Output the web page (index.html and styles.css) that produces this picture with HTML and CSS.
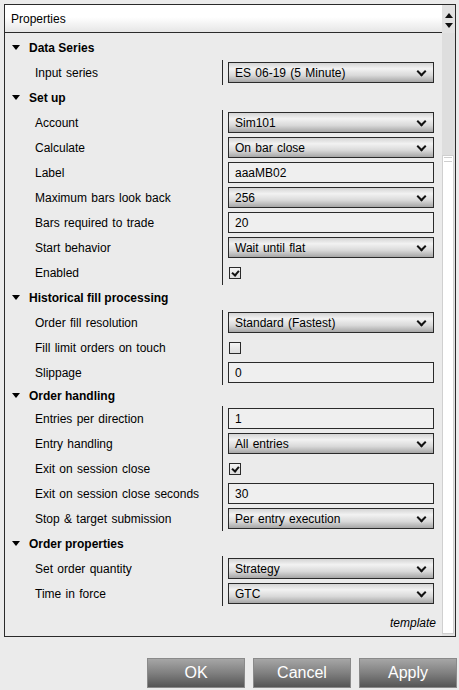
FILE: index.html
```html
<!DOCTYPE html>
<html>
<head>
<meta charset="utf-8">
<link rel="stylesheet" href="styles.css">
</head>
<body>
<div class="panel">
  <div class="main">
    <div class="header">Properties</div>
    <div class="list">
      <div class="cat"><span class="tri"></span>Data Series</div>
      <div class="group">
        <div class="row"><div class="lbl">Input series</div><div class="val"><div class="dd">ES 06-19 (5 Minute)</div></div></div>
      </div>
      <div class="cat"><span class="tri"></span>Set up</div>
      <div class="group">
        <div class="row"><div class="lbl">Account</div><div class="val"><div class="dd">Sim101</div></div></div>
        <div class="row"><div class="lbl">Calculate</div><div class="val"><div class="dd">On bar close</div></div></div>
        <div class="row"><div class="lbl">Label</div><div class="val"><div class="tb">aaaMB02</div></div></div>
        <div class="row"><div class="lbl">Maximum bars look back</div><div class="val"><div class="dd">256</div></div></div>
        <div class="row"><div class="lbl">Bars required to trade</div><div class="val"><div class="tb">20</div></div></div>
        <div class="row"><div class="lbl">Start behavior</div><div class="val"><div class="dd">Wait until flat</div></div></div>
        <div class="row"><div class="lbl">Enabled</div><div class="val"><div class="cb on"></div></div></div>
      </div>
      <div class="cat"><span class="tri"></span>Historical fill processing</div>
      <div class="group">
        <div class="row"><div class="lbl">Order fill resolution</div><div class="val"><div class="dd">Standard (Fastest)</div></div></div>
        <div class="row"><div class="lbl">Fill limit orders on touch</div><div class="val"><div class="cb"></div></div></div>
        <div class="row"><div class="lbl">Slippage</div><div class="val"><div class="tb">0</div></div></div>
      </div>
      <div class="cat short"><span class="tri"></span>Order handling</div>
      <div class="group">
        <div class="row"><div class="lbl">Entries per direction</div><div class="val"><div class="tb">1</div></div></div>
        <div class="row"><div class="lbl">Entry handling</div><div class="val"><div class="dd">All entries</div></div></div>
        <div class="row"><div class="lbl">Exit on session close</div><div class="val"><div class="cb on"></div></div></div>
        <div class="row"><div class="lbl">Exit on session close seconds</div><div class="val"><div class="tb">30</div></div></div>
        <div class="row"><div class="lbl">Stop &amp; target submission</div><div class="val"><div class="dd">Per entry execution</div></div></div>
      </div>
      <div class="cat"><span class="tri"></span>Order properties</div>
      <div class="group">
        <div class="row"><div class="lbl">Set order quantity</div><div class="val"><div class="dd">Strategy</div></div></div>
        <div class="row"><div class="lbl">Time in force</div><div class="val"><div class="dd">GTC</div></div></div>
      </div>
      <div class="template">template</div>
    </div>
  </div>
  <div class="scroll">
    <div class="arrows">
      <span class="up"></span>
      <span class="down"></span>
    </div>
    <div class="track"></div>
    <div class="thumb"><span class="grip"></span></div>
  </div>
</div>
<div class="buttons">
  <div class="btn">OK</div>
  <div class="btn">Cancel</div>
  <div class="btn">Apply</div>
</div>
</body>
</html>
```
FILE: styles.css
```css
* { box-sizing: border-box; }
html, body { margin: 0; padding: 0; }
body {
  background: #ebebeb;
  font-family: "Liberation Sans", Arial, sans-serif;
  font-size: 12px;
  word-spacing: 1px;
  color: #000;
  width: 459px;
  height: 690px;
  overflow: hidden;
}
.panel {
  margin: 4px 0 0 4px;
  width: 452px;
  height: 633px;
  border: 1px solid #2a2a2a;
  display: flex;
  background: #ebebeb;
}
.main {
  flex: 1;
  display: flex;
  flex-direction: column;
  min-width: 0;
}
.header {
  height: 28px;
  border-bottom: 1px solid #2a2a2a;
  background: linear-gradient(#ffffff 0%, #ffffff 45%, #e6e6e6 100%);
  padding-left: 6px;
  display: flex;
  align-items: center;
  font-size: 12px;
}
.list {
  flex: 1;
  padding-top: 2px;
  position: relative;
}
.cat {
  height: 25px;
  display: flex;
  align-items: center;
  font-weight: bold;
  word-spacing: 0;
  padding-left: 7px;
}
.cat.short { height: 21px; }
.tri {
  width: 0; height: 0;
  border-left: 4px solid transparent;
  border-right: 4px solid transparent;
  border-top: 5px solid #000;
  margin-right: 9px;
}
.group { display: flex; flex-direction: column; }
.row {
  height: 25px;
  display: flex;
}
.lbl {
  width: 217px;
  padding-left: 30px;
  display: flex;
  align-items: center;
}
.val {
  border-left: 1px solid #2a2a2a;
  padding-left: 5px;
  display: flex;
  align-items: center;
}
.dd, .tb {
  width: 206px;
  height: 21px;
  border: 1px solid #2a2a2a;
  padding-left: 6px;
  display: flex;
  align-items: center;
  font-size: 12px;
}
.dd {
  background: linear-gradient(#d4d4d4 0%, #f2f2f2 30%, #d9d9d9 65%, #a6a6a6 100%);
  position: relative;
}
.dd::after {
  content: "";
  position: absolute;
  right: 8px;
  top: 5px;
  width: 5px;
  height: 5px;
  border-right: 2.5px solid #111;
  border-bottom: 2.5px solid #111;
  transform: rotate(45deg);
}
.tb { background: #efefef; }
.cb {
  width: 12px;
  height: 12px;
  border: 1px solid #2a2a2a;
  background: linear-gradient(#f4f4f4, #dcdcdc);
  margin-left: 1px;
  position: relative;
}
.cb.on::after {
  content: "";
  position: absolute;
  left: 3px;
  top: 1px;
  width: 3px;
  height: 5px;
  border-right: 2px solid #111;
  border-bottom: 2px solid #111;
  transform: rotate(40deg);
}
.template {
  position: absolute;
  right: 6px;
  bottom: 6px;
  font-style: italic;
  font-size: 12px;
}
.scroll {
  width: 13px;
  display: flex;
  flex-direction: column;
  background: #e2e2e2;
}
.arrows {
  height: 28px;
  display: flex;
  flex-direction: column;
  align-items: center;
  justify-content: space-around;
  padding: 5px 0 3px;
}
.up, .down {
  width: 0; height: 0;
  border-left: 4px solid transparent;
  border-right: 4px solid transparent;
}
.up { border-bottom: 5px solid #111; }
.down { border-top: 5px solid #111; }
.track { height: 122px; background: #dedede; }
.thumb {
  flex: 1;
  margin: 0 1px 2px 0;
  background: #ffffff;
  border: 1px solid #d0d0d0;
  display: flex;
  justify-content: center;
  padding-top: 1px;
}
.grip {
  width: 8px;
  height: 5px;
  border-top: 1px solid #cfcfcf;
  border-bottom: 1px solid #cfcfcf;
}
.buttons {
  display: flex;
  gap: 8px;
  justify-content: flex-end;
  margin-top: 21px;
  margin-right: 2px;
}
.btn {
  width: 98px;
  height: 30px;
  background: linear-gradient(#a6a6a6 0%, #808080 50%, #555555 100%);
  border: 1px solid #8a8a8a;
  color: #fff;
  font-size: 16px;
  word-spacing: 0;
  display: flex;
  align-items: center;
  justify-content: center;
}
```
